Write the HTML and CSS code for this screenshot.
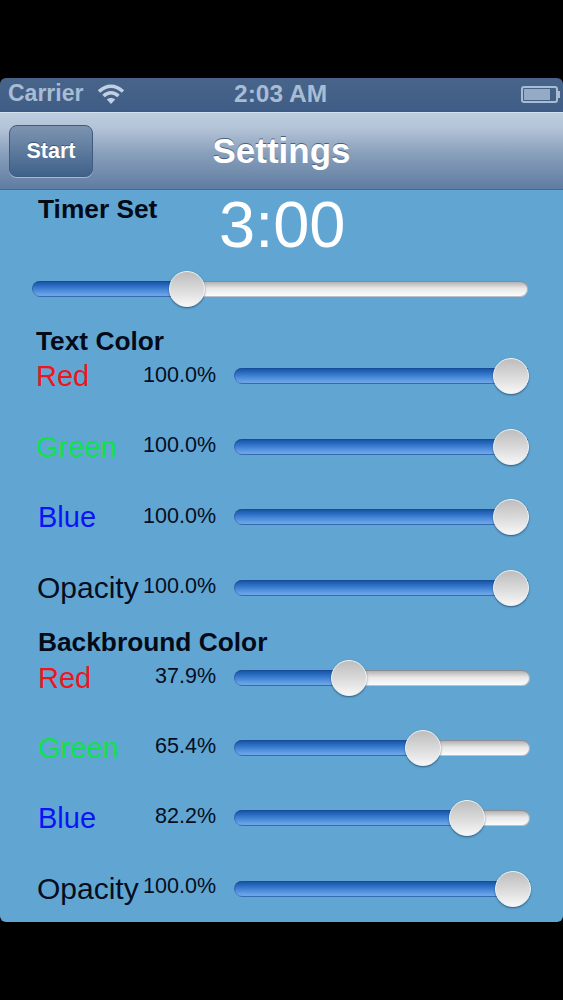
FILE: index.html
```html
<!DOCTYPE html>
<html lang="en">
<head>
<meta charset="utf-8">
<title>Settings</title>
<link rel="stylesheet" href="styles.css">
</head>
<body>
<main class="phone">
  <header class="status">
    <div class="status-left">
      <span>Carrier</span>
      <svg class="wifi" viewBox="0 0 28 22" aria-hidden="true">
        <path d="M2 8.500C9.500 1.500 18.500 1.500 26 8.500" />
        <path d="M6.500 13C11.200 8.700 16.800 8.700 21.500 13" />
        <path class="wifi-dot" d="M14 21L9.800 16.500C12.200 14.500 15.800 14.500 18.200 16.500Z" />
      </svg>
    </div>
    <span class="time">2:03 AM</span>
    <div class="battery"><i></i></div>
  </header>
  <nav class="navbar">
    <button class="start">Start</button>
    <h1>Settings</h1>
  </nav>
  <section class="content">
    <div class="timer-head">
      <h2>Timer Set</h2>
      <div class="clock">3:00</div>
    </div>
    <div class="slider slider-timer"><b style="width:30%"></b><i style="left:27.600%"></i></div>

    <h2 class="section-title">Text Color</h2>
    <div class="row"><span class="name red">Red</span><span class="pct">100.0%</span><div class="slider"><b style="width:100%"></b><i style="left:88.200%"></i></div></div>
    <div class="row"><span class="name green">Green</span><span class="pct">100.0%</span><div class="slider"><b style="width:100%"></b><i style="left:88.200%"></i></div></div>
    <div class="row"><span class="name blue">Blue</span><span class="pct">100.0%</span><div class="slider"><b style="width:100%"></b><i style="left:88.200%"></i></div></div>
    <div class="row"><span class="name opacity">Opacity</span><span class="pct">100.0%</span><div class="slider"><b style="width:100%"></b><i style="left:88.200%"></i></div></div>

    <div class="second">
      <h2 class="section-title">Backbround Color</h2>
      <div class="row"><span class="name red">Red</span><span class="pct">37.9%</span><div class="slider"><b style="width:38%"></b><i style="left:32.800%"></i></div></div>
      <div class="row"><span class="name green">Green</span><span class="pct">65.4%</span><div class="slider"><b style="width:63%"></b><i style="left:57.800%"></i></div></div>
      <div class="row"><span class="name blue">Blue</span><span class="pct">82.2%</span><div class="slider"><b style="width:78%"></b><i style="left:72.600%"></i></div></div>
      <div class="row"><span class="name opacity">Opacity</span><span class="pct">100.0%</span><div class="slider"><b style="width:100%"></b><i style="left:88.200%"></i></div></div>
    </div>
  </section>
</main>
</body>
</html>
```
FILE: styles.css
```css
* { box-sizing: border-box; }
html, body { margin: 0; height: 1000px; background: #000; overflow: hidden; }
body { padding-top: 78px; font-family: "Liberation Sans", Arial, sans-serif; }
.phone { width: 563px; height: 844px; border-radius: 6px; overflow: hidden; display: flex; flex-direction: column; }

.status { height: 34px; flex: none; display: flex; align-items: center; justify-content: space-between; position: relative; padding: 0 5px 2px 8px; background: linear-gradient(#48648a, #3f5d86); color: #a8bcd4; font-size: 23px; font-weight: 700; border-bottom: 1px solid #3c5a82; }
.status-left { display: flex; align-items: center; gap: 14px; }
.wifi { width: 28px; height: 22px; fill: none; stroke: #c1d0e2; stroke-width: 3.500; }
.wifi-dot { fill: #c1d0e2; stroke: none; }
.time { position: absolute; left: 234px; font-size: 24.500px; }
.battery { width: 37px; height: 17px; margin-top: 1px; border: 2px solid #a8bcd4; border-radius: 3px; padding: 1px; position: relative; }
.battery i { display: block; height: 100%; width: 26px; background: #94aac5; }
.battery::after { content: ""; position: absolute; right: -4px; top: 3px; width: 2px; height: 7px; background: #a8bcd4; }

.navbar { height: 78px; flex: none; position: relative; display: flex; align-items: center; justify-content: center; background: linear-gradient(#bdcddf 0, #b4c4d7 20%, #8aa0bc 52%, #5f7ca1 100%); border-top: 1px solid #d3e0ee; border-bottom: 1px solid #4a678c; }
.navbar h1 { margin: 0; color: #fff; font-size: 35px; font-weight: 700; text-shadow: 0 -1px 0 #46607f; }
.start { position: absolute; left: 9px; top: 12px; width: 84px; height: 52px; border: 1px solid #3f5c80; border-radius: 8px; background: linear-gradient(#7d94b1, #3f6189); color: #fff; font: 700 21.500px "Liberation Sans", Arial, sans-serif; padding: 0; box-shadow: 0 1px 0 #a7b9cf; text-shadow: 0 -1px 0 #3d5675; }

.content { flex: 1; background: #61a6d2; padding: 0 32px 0 36px; color: #050d1f; }
.timer-head { height: 91px; position: relative; }
h2 { margin: 0; font-size: 26.300px; font-weight: 700; line-height: 30px; color: #040a18; }
.timer-head h2 { padding: 4px 0 0 2px; }
.clock { position: absolute; left: 183px; top: 0; color: #fff; font-size: 65px; line-height: 70px; font-weight: 400; }

.slider-timer { margin: 0 0 29px -4px; width: 496px; }
.section-title { height: 30px; margin-bottom: -15px; }
.row { display: grid; grid-template-columns: 107px 91px 294px; align-items: center; height: 70.500px; }
.name { font-size: 29px; line-height: 34px; color: #050d1f; position: relative; }
.red { color: #f0141e; }
.green { color: #12e04a; }
.blue { color: #0a14f5; padding-left: 2px; }
.opacity { font-size: 30px; padding-left: 1px; white-space: nowrap; }
.pct { font-size: 21.500px; text-align: right; justify-self: end; padding-right: 18px; position: relative; top: -1px; white-space: nowrap; }

.slider { height: 16px; border-radius: 8px; position: relative; background: linear-gradient(#a9a9a9 0, #e7e7e7 45%, #fff 100%); box-shadow: inset 0 0 0 1px rgba(60, 80, 110, .35); }
.slider b { display: block; height: 100%; border-radius: 8px 0 0 8px; background: linear-gradient(#144f9f 0, #2f72c8 35%, #4b8bd8 60%, #6fa8ea 90%, #3b75bb 100%); box-shadow: inset 0 0 0 1px rgba(20, 70, 140, .4); }
.slider i { position: absolute; top: 50%; width: 36px; height: 36px; margin-top: -18px; border-radius: 50%; background: linear-gradient(#bdbdbd 0, #d9d9d9 50%, #f7f7f7 100%); border: 1px solid #f2f2f2; box-shadow: 0 1px 2px rgba(20, 40, 70, .6); }

.second { margin-top: 4px; }
.second .section-title { padding-left: 2px; margin-bottom: -14px; }
.second .red, .second .green { left: 2px; }
.second .pct { top: -2px; }
.second .row { grid-template-columns: 107px 91px 296px; height: 70.200px; }
```
